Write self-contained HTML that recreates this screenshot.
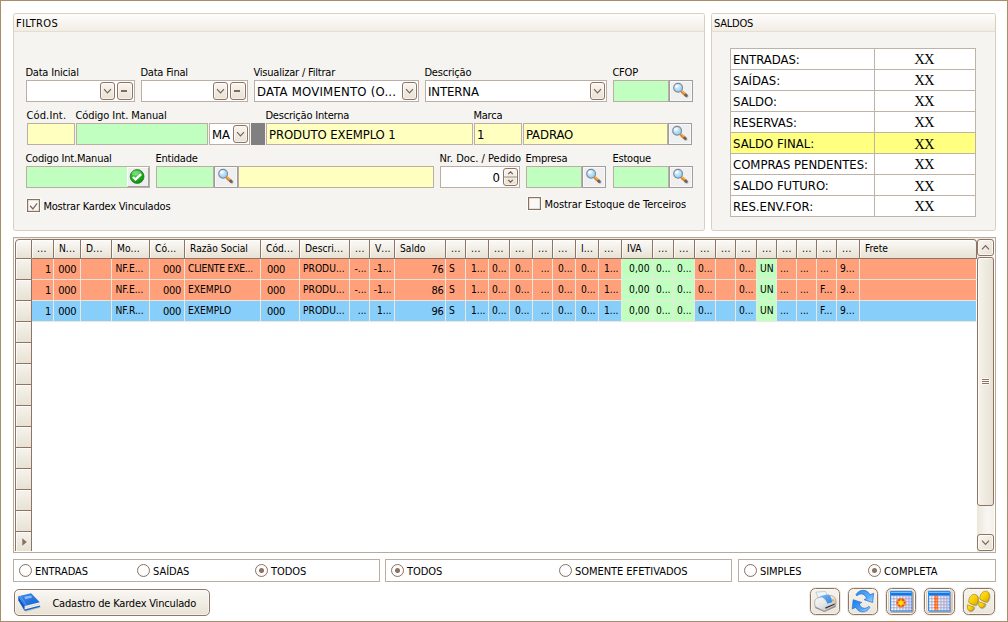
<!DOCTYPE html>
<html><head><meta charset="utf-8"><title>Kardex</title>
<style>
*{box-sizing:border-box;margin:0;padding:0}
html,body{width:1008px;height:622px;overflow:hidden;background:#fff}
body{position:relative;font-family:"DejaVu Sans Condensed","Liberation Sans",sans-serif;font-size:11px;color:#000}
div,span,svg{position:absolute}
.win{left:0;top:0;width:1008px;height:622px;background:#fff}
.frame{left:0;top:0;width:1008px;height:622px;border:1px solid #a98d66}
.panel{border:1px solid #d9cfbd;border-radius:2.5px;background:#f6f4f0}
.phead{left:0;top:0;right:0;height:18px;border-bottom:1px solid #e6dfd1;background:linear-gradient(#fefdfc,#f1ede5);border-radius:2px 2px 0 0}
.l{white-space:nowrap;line-height:13px;height:13px;letter-spacing:-0.2px}
.inp{border:1px solid #bcaea4;background:#fff}
.y{background:#ffffc0}
.g{background:#c0ffc0}
.t13{font-size:13px;white-space:nowrap;line-height:16px;height:16px;letter-spacing:-0.1px}
.dd{width:15px;height:18px;border:1px solid #8d7464;border-radius:3px;background:linear-gradient(#f8f6f1,#e8e2d4);box-shadow:inset 0 0 0 1px rgba(255,255,255,0.55)}
.mb{width:16px;height:18px;border:1px solid #8d7464;border-radius:3px;background:linear-gradient(#f8f6f1,#e8e2d4);box-shadow:inset 0 0 0 1px rgba(255,255,255,0.55)}
.sb{width:24px;height:22px;border:1px solid #9e9e9e;background:#efefef;box-shadow:inset 0 0 0 1px rgba(255,255,255,0.55)}
.cb{width:13px;height:13px;border:1px solid #8a7060;background:#f9f8f5;box-shadow:0 0 0 1px rgba(255,255,255,0.7),inset 0 0 0 0.5px rgba(138,112,96,0.35)}
.rg{border:1px solid #bcafa0;background:#fff}
.rd{width:13px;height:13px;border:1.4px solid #8a7264;border-radius:50%;background:radial-gradient(circle at 50% 45%,#fff 45%,#f1ece5)}
.rd.on::after{content:"";position:absolute;left:2.8px;top:2.8px;width:5px;height:5px;border-radius:50%;background:#8b7265}
.ib{height:27px;border:1px solid #8f7668;border-radius:5.5px;background:linear-gradient(#f6f3ec,#ebe6da);box-shadow:0 0 0 1px rgba(236,228,216,0.8),inset 0 0 0 1px rgba(255,255,255,0.45)}
.ib2{box-shadow:0 0 0 1px rgba(236,228,216,0.8),inset 0 0 0 1px #fbf9f4,inset 0 0 0 2px #d9cdbd}

.gh{top:239px;height:20px;border-top:1px solid #8d7464;border-right:1px solid #8d7464;border-bottom:1px solid #8d7464;background:linear-gradient(#fbfaf7,#f2eee6 50%,#e8e2d4);box-shadow:inset 1px 1px 0 rgba(255,255,255,0.7);white-space:nowrap;overflow:hidden;font-size:10.2px;line-height:18px;padding-left:5px}
.gc{height:20px;white-space:nowrap;overflow:hidden;font-size:10.2px;line-height:20px}
.gc.n{font-size:11px;letter-spacing:-0.3px;line-height:22px}
.ind{left:15px;width:17px;height:21px;border-left:1px solid #8d7464;border-right:1px solid #8d7464;border-bottom:1px solid #8d7464;background:linear-gradient(#f6f3ed,#e8e2d4);box-shadow:inset 1px 1px 0 rgba(255,255,255,0.7)}
</style></head><body>
<div class="win">
<svg width="0" height="0" style="left:0;top:0"><defs><radialGradient id="mg" cx="0.4" cy="0.35" r="0.7"><stop offset="0" stop-color="#e4f5ff"/><stop offset="0.6" stop-color="#a9dbf8"/><stop offset="1" stop-color="#7fc0ec"/></radialGradient><radialGradient id="cg" cx="0.4" cy="0.3" r="0.8"><stop offset="0" stop-color="#5cd85c"/><stop offset="0.55" stop-color="#1eab1e"/><stop offset="1" stop-color="#0d7d0d"/></radialGradient></defs></svg>
<div class="panel" style="left:13px;top:13px;width:692px;height:218px;"><div class="phead"></div></div>
<span class="l" style="left:15.9px;top:17px;letter-spacing:0.38px">FILTROS</span>
<span class="l" style="left:25.4px;top:66px;">Data Inicial</span>
<div class="inp" style="left:26px;top:80px;width:109px;height:22px;"></div>
<div class="dd" style="left:100px;top:82px"><svg width="13" height="16" viewBox="0 0 13 16" style="left:0;top:0"><path d="M3 6.2 L6.5 9.8 L10 6.2" fill="none" stroke="#7d6356" stroke-width="1.2"/></svg></div>
<div class="mb" style="left:117px;top:82px"><div style="left:3px;top:7px;width:6px;height:2px;background:#85695b"></div></div>
<span class="l" style="left:140.4px;top:66px;">Data Final</span>
<div class="inp" style="left:141px;top:80px;width:107px;height:22px;"></div>
<div class="dd" style="left:213px;top:82px"><svg width="13" height="16" viewBox="0 0 13 16" style="left:0;top:0"><path d="M3 6.2 L6.5 9.8 L10 6.2" fill="none" stroke="#7d6356" stroke-width="1.2"/></svg></div>
<div class="mb" style="left:230px;top:82px"><div style="left:3px;top:7px;width:6px;height:2px;background:#85695b"></div></div>
<span class="l" style="left:253.4px;top:66px;">Visualizar / Filtrar</span>
<div class="inp" style="left:254px;top:80px;width:165px;height:22px;"></div>
<span class="t13" style="left:257px;top:84px;letter-spacing:0.22px">DATA MOVIMENTO (O...</span>
<div class="dd" style="left:402px;top:82px"><svg width="13" height="16" viewBox="0 0 13 16" style="left:0;top:0"><path d="M3 6.2 L6.5 9.8 L10 6.2" fill="none" stroke="#7d6356" stroke-width="1.2"/></svg></div>
<span class="l" style="left:424.4px;top:66px;">Descrição</span>
<div class="inp" style="left:425px;top:80px;width:182px;height:22px;"></div>
<span class="t13" style="left:428px;top:84px;">INTERNA</span>
<div class="dd" style="left:590px;top:82px"><svg width="13" height="16" viewBox="0 0 13 16" style="left:0;top:0"><path d="M3 6.2 L6.5 9.8 L10 6.2" fill="none" stroke="#7d6356" stroke-width="1.2"/></svg></div>
<span class="l" style="left:612.4px;top:66px;">CFOP</span>
<div class="inp g" style="left:613px;top:80px;width:56px;height:22px;"></div>
<div class="sb" style="left:669px;top:80px"><svg width="22" height="20" viewBox="0 0 22 20" style="left:0;top:0"><path d="M12.6 11.4 L16.9 15.2" stroke="#8a8a8a" stroke-width="3.2" stroke-linecap="round" opacity="0.45"/><path d="M11.4 10.2 L15.8 14.1" stroke="#ee7d1c" stroke-width="2.8" stroke-linecap="butt"/><path d="M11.9 9.8 L16 13.5" stroke="#ffd24a" stroke-width="0.9" stroke-linecap="butt"/><path d="M15.6 13.9 L16.4 14.6" stroke="#666" stroke-width="2.8" stroke-linecap="round"/><circle cx="8.1" cy="6.8" r="4.4" fill="url(#mg)" stroke="#7d8894" stroke-width="1.1"/><ellipse cx="6.8" cy="5.2" rx="2" ry="1.3" fill="#fff" opacity="0.7" transform="rotate(-30 6.8 5.2)"/></svg></div>
<span class="l" style="left:26.4px;top:109px;letter-spacing:0.15px">Cód.Int.</span>
<div class="inp y" style="left:27px;top:123px;width:48px;height:22px;"></div>
<span class="l" style="left:75.4px;top:109px;letter-spacing:-0.08px">Código Int. Manual</span>
<div class="inp g" style="left:76px;top:123px;width:132px;height:22px;"></div>
<div class="inp" style="left:209px;top:123px;width:41px;height:22px;"></div>
<span class="t13" style="left:212px;top:127px;">MA</span>
<div class="dd" style="left:233px;top:125px"><svg width="13" height="16" viewBox="0 0 13 16" style="left:0;top:0"><path d="M3 6.2 L6.5 9.8 L10 6.2" fill="none" stroke="#7d6356" stroke-width="1.2"/></svg></div>
<div class="" style="left:251px;top:123px;width:14px;height:22px;background:#808080"></div>
<span class="l" style="left:265.4px;top:109px;">Descrição Interna</span>
<div class="inp y" style="left:266px;top:123px;width:207px;height:22px;"></div>
<span class="t13" style="left:269px;top:127px;">PRODUTO EXEMPLO 1</span>
<span class="l" style="left:473.4px;top:109px;">Marca</span>
<div class="inp y" style="left:474px;top:123px;width:48px;height:22px;"></div>
<span class="t13" style="left:477px;top:127px;">1</span>
<div class="inp y" style="left:523px;top:123px;width:145px;height:22px;"></div>
<span class="t13" style="left:526px;top:127px;">PADRAO</span>
<div class="sb" style="left:668px;top:123px"><svg width="22" height="20" viewBox="0 0 22 20" style="left:0;top:0"><path d="M12.6 11.4 L16.9 15.2" stroke="#8a8a8a" stroke-width="3.2" stroke-linecap="round" opacity="0.45"/><path d="M11.4 10.2 L15.8 14.1" stroke="#ee7d1c" stroke-width="2.8" stroke-linecap="butt"/><path d="M11.9 9.8 L16 13.5" stroke="#ffd24a" stroke-width="0.9" stroke-linecap="butt"/><path d="M15.6 13.9 L16.4 14.6" stroke="#666" stroke-width="2.8" stroke-linecap="round"/><circle cx="8.1" cy="6.8" r="4.4" fill="url(#mg)" stroke="#7d8894" stroke-width="1.1"/><ellipse cx="6.8" cy="5.2" rx="2" ry="1.3" fill="#fff" opacity="0.7" transform="rotate(-30 6.8 5.2)"/></svg></div>
<span class="l" style="left:25.4px;top:152px;">Codigo Int.Manual</span>
<div class="inp g" style="left:26px;top:166px;width:124px;height:22px;"></div>
<div style="left:127px;top:167px;width:22px;height:20px;background:#eee;border-top:1px solid #fff;border-left:1px solid #fff;border-right:1px solid #a2a2a2;border-bottom:1px solid #a2a2a2"><svg width="22" height="20" viewBox="0 0 22 20" style="left:0;top:0"><circle cx="9.1" cy="8.5" r="6.9" fill="url(#cg)" stroke="#128312" stroke-width="0.8"/><ellipse cx="8.1" cy="5" rx="4.6" ry="2.6" fill="#fff" opacity="0.22"/><path d="M4.8 9 L7.5 11.4 L13.2 6.1" fill="none" stroke="#fff" stroke-width="2.3" stroke-linecap="butt" stroke-linejoin="miter"/></svg></div>
<span class="l" style="left:155.4px;top:152px;">Entidade</span>
<div class="inp g" style="left:156px;top:166px;width:58px;height:22px;"></div>
<div class="sb" style="left:214px;top:166px"><svg width="22" height="20" viewBox="0 0 22 20" style="left:0;top:0"><path d="M12.6 11.4 L16.9 15.2" stroke="#8a8a8a" stroke-width="3.2" stroke-linecap="round" opacity="0.45"/><path d="M11.4 10.2 L15.8 14.1" stroke="#ee7d1c" stroke-width="2.8" stroke-linecap="butt"/><path d="M11.9 9.8 L16 13.5" stroke="#ffd24a" stroke-width="0.9" stroke-linecap="butt"/><path d="M15.6 13.9 L16.4 14.6" stroke="#666" stroke-width="2.8" stroke-linecap="round"/><circle cx="8.1" cy="6.8" r="4.4" fill="url(#mg)" stroke="#7d8894" stroke-width="1.1"/><ellipse cx="6.8" cy="5.2" rx="2" ry="1.3" fill="#fff" opacity="0.7" transform="rotate(-30 6.8 5.2)"/></svg></div>
<div class="inp y" style="left:238px;top:166px;width:196px;height:22px;"></div>
<span class="l" style="left:439.4px;top:152px;letter-spacing:0">Nr. Doc. / Pedido</span>
<div class="inp" style="left:440px;top:166px;width:80px;height:22px;"></div>
<span class="t13" style="left:440px;top:170px;width:59.8px;text-align:right">0</span>
<div class="dd" style="left:503px;top:168px;width:15px;height:18px"><svg width="13" height="16" viewBox="0 0 13 16" style="left:0;top:0"><rect x="0" y="7.5" width="13" height="1" fill="#a08b7c"/><path d="M4.2 5.2 L6.5 2.9 L8.8 5.2" fill="none" stroke="#6f584c" stroke-width="1.2"/><path d="M4.2 10.8 L6.5 13.1 L8.8 10.8" fill="none" stroke="#6f584c" stroke-width="1.2"/></svg></div>
<span class="l" style="left:525.4px;top:152px;">Empresa</span>
<div class="inp g" style="left:526px;top:166px;width:56px;height:22px;"></div>
<div class="sb" style="left:582px;top:166px"><svg width="22" height="20" viewBox="0 0 22 20" style="left:0;top:0"><path d="M12.6 11.4 L16.9 15.2" stroke="#8a8a8a" stroke-width="3.2" stroke-linecap="round" opacity="0.45"/><path d="M11.4 10.2 L15.8 14.1" stroke="#ee7d1c" stroke-width="2.8" stroke-linecap="butt"/><path d="M11.9 9.8 L16 13.5" stroke="#ffd24a" stroke-width="0.9" stroke-linecap="butt"/><path d="M15.6 13.9 L16.4 14.6" stroke="#666" stroke-width="2.8" stroke-linecap="round"/><circle cx="8.1" cy="6.8" r="4.4" fill="url(#mg)" stroke="#7d8894" stroke-width="1.1"/><ellipse cx="6.8" cy="5.2" rx="2" ry="1.3" fill="#fff" opacity="0.7" transform="rotate(-30 6.8 5.2)"/></svg></div>
<span class="l" style="left:612.4px;top:152px;">Estoque</span>
<div class="inp g" style="left:613px;top:166px;width:56px;height:22px;"></div>
<div class="sb" style="left:669px;top:166px"><svg width="22" height="20" viewBox="0 0 22 20" style="left:0;top:0"><path d="M12.6 11.4 L16.9 15.2" stroke="#8a8a8a" stroke-width="3.2" stroke-linecap="round" opacity="0.45"/><path d="M11.4 10.2 L15.8 14.1" stroke="#ee7d1c" stroke-width="2.8" stroke-linecap="butt"/><path d="M11.9 9.8 L16 13.5" stroke="#ffd24a" stroke-width="0.9" stroke-linecap="butt"/><path d="M15.6 13.9 L16.4 14.6" stroke="#666" stroke-width="2.8" stroke-linecap="round"/><circle cx="8.1" cy="6.8" r="4.4" fill="url(#mg)" stroke="#7d8894" stroke-width="1.1"/><ellipse cx="6.8" cy="5.2" rx="2" ry="1.3" fill="#fff" opacity="0.7" transform="rotate(-30 6.8 5.2)"/></svg></div>
<div class="cb" style="left:27px;top:199px;width:13px;height:13px;"><svg width="11" height="11" viewBox="0 0 11 11" style="left:0;top:0"><path d="M2.1 5.7 L4.9 8.9 L9.1 3.3" fill="none" stroke="#85695b" stroke-width="1.3"/></svg></div>
<span class="l" style="left:43.4px;top:199.5px;">Mostrar Kardex Vinculados</span>
<div class="cb" style="left:528px;top:197px;width:13px;height:13px;"></div>
<span class="l" style="left:544.4px;top:198px;letter-spacing:-0.05px">Mostrar Estoque de Terceiros</span>
<div class="panel" style="left:711px;top:13px;width:285px;height:218px;"><div class="phead"></div></div>
<span class="l" style="left:713.9px;top:17px;">SALDOS</span>
<div class="" style="left:730px;top:48px;width:246px;height:169px;background:#beb3a7"></div>
<div class="" style="left:731px;top:49px;width:143px;height:20px;background:#fff"></div>
<div class="" style="left:875px;top:49px;width:100px;height:20px;background:#fff"></div>
<span class="t13" style="left:733px;top:52px;letter-spacing:-0.03px">ENTRADAS:</span>
<span class="t13" style="left:874px;top:50px;width:100px;text-align:center;font-family:'Liberation Serif',serif;font-size:14.6px;line-height:18px;height:18px;letter-spacing:-0.7px">XX</span>
<div class="" style="left:731px;top:70px;width:143px;height:20px;background:#fff"></div>
<div class="" style="left:875px;top:70px;width:100px;height:20px;background:#fff"></div>
<span class="t13" style="left:733px;top:73px;letter-spacing:-0.03px">SAÍDAS:</span>
<span class="t13" style="left:874px;top:71px;width:100px;text-align:center;font-family:'Liberation Serif',serif;font-size:14.6px;line-height:18px;height:18px;letter-spacing:-0.7px">XX</span>
<div class="" style="left:731px;top:91px;width:143px;height:20px;background:#fff"></div>
<div class="" style="left:875px;top:91px;width:100px;height:20px;background:#fff"></div>
<span class="t13" style="left:733px;top:94px;letter-spacing:-0.03px">SALDO:</span>
<span class="t13" style="left:874px;top:92px;width:100px;text-align:center;font-family:'Liberation Serif',serif;font-size:14.6px;line-height:18px;height:18px;letter-spacing:-0.7px">XX</span>
<div class="" style="left:731px;top:112px;width:143px;height:20px;background:#fff"></div>
<div class="" style="left:875px;top:112px;width:100px;height:20px;background:#fff"></div>
<span class="t13" style="left:733px;top:115px;letter-spacing:-0.03px">RESERVAS:</span>
<span class="t13" style="left:874px;top:113px;width:100px;text-align:center;font-family:'Liberation Serif',serif;font-size:14.6px;line-height:18px;height:18px;letter-spacing:-0.7px">XX</span>
<div class="" style="left:731px;top:133px;width:143px;height:20px;background:#ffff80"></div>
<div class="" style="left:875px;top:133px;width:100px;height:20px;background:#ffff80"></div>
<span class="t13" style="left:733px;top:136px;letter-spacing:-0.03px">SALDO FINAL:</span>
<span class="t13" style="left:874px;top:135px;width:100px;text-align:center;font-family:'Liberation Serif',serif;font-size:14.6px;line-height:18px;height:18px;letter-spacing:-0.7px">XX</span>
<div class="" style="left:731px;top:154px;width:143px;height:20px;background:#fff"></div>
<div class="" style="left:875px;top:154px;width:100px;height:20px;background:#fff"></div>
<span class="t13" style="left:733px;top:157px;letter-spacing:-0.03px">COMPRAS PENDENTES:</span>
<span class="t13" style="left:874px;top:155px;width:100px;text-align:center;font-family:'Liberation Serif',serif;font-size:14.6px;line-height:18px;height:18px;letter-spacing:-0.7px">XX</span>
<div class="" style="left:731px;top:175px;width:143px;height:20px;background:#fff"></div>
<div class="" style="left:875px;top:175px;width:100px;height:20px;background:#fff"></div>
<span class="t13" style="left:733px;top:178px;letter-spacing:-0.03px">SALDO FUTURO:</span>
<span class="t13" style="left:874px;top:177px;width:100px;text-align:center;font-family:'Liberation Serif',serif;font-size:14.6px;line-height:18px;height:18px;letter-spacing:-0.7px">XX</span>
<div class="" style="left:731px;top:196px;width:143px;height:20px;background:#fff"></div>
<div class="" style="left:875px;top:196px;width:100px;height:20px;background:#fff"></div>
<span class="t13" style="left:733px;top:199px;letter-spacing:-0.03px">RES.ENV.FOR:</span>
<span class="t13" style="left:874px;top:197px;width:100px;text-align:center;font-family:'Liberation Serif',serif;font-size:14.6px;line-height:18px;height:18px;letter-spacing:-0.7px">XX</span>
<div class="" style="left:13px;top:237px;width:983px;height:316px;border:1px solid #b8ab9b;background:#fff"></div>
<div class="" style="left:14px;top:238px;width:981px;height:1px;background:#efeae2"></div>
<div class="gh" style="padding:0;border-left:1px solid #8d7464;border-radius:4px 0 0 0;left:15px;width:17px"></div>
<div class="gh" style="left:32px;width:22px;letter-spacing:0.3px;">...</div>
<div class="gh" style="left:54px;width:27px;">N<span style="position:static;letter-spacing:0.25px">...</span></div>
<div class="gh" style="left:81px;width:31px;">D<span style="position:static;letter-spacing:0.25px">...</span></div>
<div class="gh" style="left:112px;width:38px;">Mo<span style="position:static;letter-spacing:0.25px">...</span></div>
<div class="gh" style="left:150px;width:35px;">Có<span style="position:static;letter-spacing:0.25px">...</span></div>
<div class="gh" style="left:185px;width:76px;">Razão Social</div>
<div class="gh" style="left:261px;width:39px;">Cód<span style="position:static;letter-spacing:0.25px">...</span></div>
<div class="gh" style="left:300px;width:50px;">Descri<span style="position:static;letter-spacing:0.25px">...</span></div>
<div class="gh" style="left:350px;width:20px;letter-spacing:0.3px;">...</div>
<div class="gh" style="left:370px;width:25px;">V<span style="position:static;letter-spacing:0.25px">...</span></div>
<div class="gh" style="left:395px;width:51px;">Saldo</div>
<div class="gh" style="left:446px;width:20px;letter-spacing:0.3px;">...</div>
<div class="gh" style="left:466px;width:23px;letter-spacing:0.3px;">...</div>
<div class="gh" style="left:489px;width:21px;letter-spacing:0.3px;">...</div>
<div class="gh" style="left:510px;width:23px;letter-spacing:0.3px;">...</div>
<div class="gh" style="left:533px;width:20px;letter-spacing:0.3px;">...</div>
<div class="gh" style="left:553px;width:23px;letter-spacing:0.3px;">...</div>
<div class="gh" style="left:576px;width:23px;">I<span style="position:static;letter-spacing:0.25px">...</span></div>
<div class="gh" style="left:599px;width:23px;letter-spacing:0.3px;">...</div>
<div class="gh" style="left:622px;width:31px;">IVA</div>
<div class="gh" style="left:653px;width:21px;letter-spacing:0.3px;">...</div>
<div class="gh" style="left:674px;width:21px;letter-spacing:0.3px;">...</div>
<div class="gh" style="left:695px;width:21px;letter-spacing:0.3px;">...</div>
<div class="gh" style="left:716px;width:20px;letter-spacing:0.3px;">...</div>
<div class="gh" style="left:736px;width:21px;letter-spacing:0.3px;">...</div>
<div class="gh" style="left:757px;width:20px;letter-spacing:0.3px;">...</div>
<div class="gh" style="left:777px;width:20px;letter-spacing:0.3px;">...</div>
<div class="gh" style="left:797px;width:20px;letter-spacing:0.3px;">...</div>
<div class="gh" style="left:817px;width:20px;letter-spacing:0.3px;">...</div>
<div class="gh" style="left:837px;width:23px;letter-spacing:0.3px;">...</div>
<div class="gh" style="left:860px;width:117px;border-radius:0 4px 0 0;">Frete</div>
<div class="gc n" style="left:32px;top:259px;width:21px;background:#ffa07a;text-align:right;padding-right:2px;">1</div>
<div class="" style="left:53px;top:259px;width:1px;height:20px;background:#ebe6de"></div>
<div class="gc n" style="left:54px;top:259px;width:26px;background:#ffa07a;padding-left:4.2px;">000</div>
<div class="" style="left:80px;top:259px;width:1px;height:20px;background:#ebe6de"></div>
<div class="gc" style="left:81px;top:259px;width:30px;background:#ffa07a;padding-left:3px;"></div>
<div class="" style="left:111px;top:259px;width:1px;height:20px;background:#ebe6de"></div>
<div class="gc" style="left:112px;top:259px;width:37px;background:#ffa07a;padding-left:3.5px;">NF.E...</div>
<div class="" style="left:149px;top:259px;width:1px;height:20px;background:#ebe6de"></div>
<div class="gc n" style="left:150px;top:259px;width:34px;background:#ffa07a;text-align:right;padding-right:3px;">000</div>
<div class="" style="left:184px;top:259px;width:1px;height:20px;background:#ebe6de"></div>
<div class="gc" style="left:185px;top:259px;width:75px;background:#ffa07a;padding-left:3px;"><span style="position:static;letter-spacing:-0.2px">CLIENTE EXE...</span></div>
<div class="" style="left:260px;top:259px;width:1px;height:20px;background:#ebe6de"></div>
<div class="gc n" style="left:261px;top:259px;width:38px;background:#ffa07a;padding-left:6px;">000</div>
<div class="" style="left:299px;top:259px;width:1px;height:20px;background:#ebe6de"></div>
<div class="gc" style="left:300px;top:259px;width:49px;background:#ffa07a;padding-left:3px;">PRODU...</div>
<div class="" style="left:349px;top:259px;width:1px;height:20px;background:#ebe6de"></div>
<div class="gc" style="left:350px;top:259px;width:19px;background:#ffa07a;text-align:right;padding-right:2.5px;">-...</div>
<div class="" style="left:369px;top:259px;width:1px;height:20px;background:#ebe6de"></div>
<div class="gc" style="left:370px;top:259px;width:24px;background:#ffa07a;text-align:right;padding-right:2.5px;">-1...</div>
<div class="" style="left:394px;top:259px;width:1px;height:20px;background:#ebe6de"></div>
<div class="gc n" style="left:395px;top:259px;width:50px;background:#ffa07a;text-align:right;padding-right:1.5px;">76</div>
<div class="" style="left:445px;top:259px;width:1px;height:20px;background:#ebe6de"></div>
<div class="gc" style="left:446px;top:259px;width:19px;background:#ffa07a;padding-left:3px;">S</div>
<div class="" style="left:465px;top:259px;width:1px;height:20px;background:#ebe6de"></div>
<div class="gc" style="left:466px;top:259px;width:22px;background:#ffa07a;text-align:right;padding-right:2.5px;">1...</div>
<div class="" style="left:488px;top:259px;width:1px;height:20px;background:#ebe6de"></div>
<div class="gc" style="left:489px;top:259px;width:20px;background:#ffa07a;text-align:right;padding-right:2.5px;">0...</div>
<div class="" style="left:509px;top:259px;width:1px;height:20px;background:#ebe6de"></div>
<div class="gc" style="left:510px;top:259px;width:22px;background:#ffa07a;text-align:right;padding-right:2.5px;">0...</div>
<div class="" style="left:532px;top:259px;width:1px;height:20px;background:#ebe6de"></div>
<div class="gc" style="left:533px;top:259px;width:19px;background:#ffa07a;text-align:right;padding-right:2.5px;">...</div>
<div class="" style="left:552px;top:259px;width:1px;height:20px;background:#ebe6de"></div>
<div class="gc" style="left:553px;top:259px;width:22px;background:#ffa07a;text-align:right;padding-right:2.5px;">0...</div>
<div class="" style="left:575px;top:259px;width:1px;height:20px;background:#ebe6de"></div>
<div class="gc" style="left:576px;top:259px;width:22px;background:#ffa07a;text-align:right;padding-right:2.5px;">0...</div>
<div class="" style="left:598px;top:259px;width:1px;height:20px;background:#ebe6de"></div>
<div class="gc" style="left:599px;top:259px;width:22px;background:#ffa07a;text-align:right;padding-right:2.5px;">1...</div>
<div class="" style="left:621px;top:259px;width:1px;height:20px;background:#ebe6de"></div>
<div class="gc" style="left:622px;top:259px;width:30px;background:#c0ffc0;text-align:right;padding-right:2.5px;">0,00</div>
<div class="" style="left:652px;top:259px;width:1px;height:20px;background:#ebe6de"></div>
<div class="gc" style="left:653px;top:259px;width:20px;background:#c0ffc0;text-align:right;padding-right:2.5px;">0...</div>
<div class="" style="left:673px;top:259px;width:1px;height:20px;background:#ebe6de"></div>
<div class="gc" style="left:674px;top:259px;width:20px;background:#c0ffc0;text-align:right;padding-right:2.5px;">0...</div>
<div class="" style="left:694px;top:259px;width:1px;height:20px;background:#ebe6de"></div>
<div class="gc" style="left:695px;top:259px;width:20px;background:#ffa07a;text-align:right;padding-right:2.5px;">0...</div>
<div class="" style="left:715px;top:259px;width:1px;height:20px;background:#ebe6de"></div>
<div class="gc" style="left:716px;top:259px;width:19px;background:#ffa07a;padding-left:3px;"></div>
<div class="" style="left:735px;top:259px;width:1px;height:20px;background:#ebe6de"></div>
<div class="gc" style="left:736px;top:259px;width:20px;background:#ffa07a;text-align:right;padding-right:2.5px;">0...</div>
<div class="" style="left:756px;top:259px;width:1px;height:20px;background:#ebe6de"></div>
<div class="gc" style="left:757px;top:259px;width:19px;background:#c0ffc0;padding-left:3px;">UN</div>
<div class="" style="left:776px;top:259px;width:1px;height:20px;background:#ebe6de"></div>
<div class="gc" style="left:777px;top:259px;width:19px;background:#ffa07a;padding-left:3px;">...</div>
<div class="" style="left:796px;top:259px;width:1px;height:20px;background:#ebe6de"></div>
<div class="gc" style="left:797px;top:259px;width:19px;background:#ffa07a;padding-left:3px;">...</div>
<div class="" style="left:816px;top:259px;width:1px;height:20px;background:#ebe6de"></div>
<div class="gc" style="left:817px;top:259px;width:19px;background:#ffa07a;padding-left:3px;">...</div>
<div class="" style="left:836px;top:259px;width:1px;height:20px;background:#ebe6de"></div>
<div class="gc" style="left:837px;top:259px;width:22px;background:#ffa07a;padding-left:3px;">9...</div>
<div class="" style="left:859px;top:259px;width:1px;height:20px;background:#ebe6de"></div>
<div class="gc" style="left:860px;top:259px;width:116px;background:#ffa07a;padding-left:3px;"></div>
<div class="" style="left:32px;top:279px;width:945px;height:1px;background:#ebe6de"></div>
<div class="gc n" style="left:32px;top:280px;width:21px;background:#ffa07a;text-align:right;padding-right:2px;">1</div>
<div class="" style="left:53px;top:280px;width:1px;height:20px;background:#ebe6de"></div>
<div class="gc n" style="left:54px;top:280px;width:26px;background:#ffa07a;padding-left:4.2px;">000</div>
<div class="" style="left:80px;top:280px;width:1px;height:20px;background:#ebe6de"></div>
<div class="gc" style="left:81px;top:280px;width:30px;background:#ffa07a;padding-left:3px;"></div>
<div class="" style="left:111px;top:280px;width:1px;height:20px;background:#ebe6de"></div>
<div class="gc" style="left:112px;top:280px;width:37px;background:#ffa07a;padding-left:3.5px;">NF.E...</div>
<div class="" style="left:149px;top:280px;width:1px;height:20px;background:#ebe6de"></div>
<div class="gc n" style="left:150px;top:280px;width:34px;background:#ffa07a;text-align:right;padding-right:3px;">000</div>
<div class="" style="left:184px;top:280px;width:1px;height:20px;background:#ebe6de"></div>
<div class="gc" style="left:185px;top:280px;width:75px;background:#ffa07a;padding-left:3px;">EXEMPLO</div>
<div class="" style="left:260px;top:280px;width:1px;height:20px;background:#ebe6de"></div>
<div class="gc n" style="left:261px;top:280px;width:38px;background:#ffa07a;padding-left:6px;">000</div>
<div class="" style="left:299px;top:280px;width:1px;height:20px;background:#ebe6de"></div>
<div class="gc" style="left:300px;top:280px;width:49px;background:#ffa07a;padding-left:3px;">PRODU...</div>
<div class="" style="left:349px;top:280px;width:1px;height:20px;background:#ebe6de"></div>
<div class="gc" style="left:350px;top:280px;width:19px;background:#ffa07a;text-align:right;padding-right:2.5px;">-...</div>
<div class="" style="left:369px;top:280px;width:1px;height:20px;background:#ebe6de"></div>
<div class="gc" style="left:370px;top:280px;width:24px;background:#ffa07a;text-align:right;padding-right:2.5px;">-1...</div>
<div class="" style="left:394px;top:280px;width:1px;height:20px;background:#ebe6de"></div>
<div class="gc n" style="left:395px;top:280px;width:50px;background:#ffa07a;text-align:right;padding-right:1.5px;">86</div>
<div class="" style="left:445px;top:280px;width:1px;height:20px;background:#ebe6de"></div>
<div class="gc" style="left:446px;top:280px;width:19px;background:#ffa07a;padding-left:3px;">S</div>
<div class="" style="left:465px;top:280px;width:1px;height:20px;background:#ebe6de"></div>
<div class="gc" style="left:466px;top:280px;width:22px;background:#ffa07a;text-align:right;padding-right:2.5px;">1...</div>
<div class="" style="left:488px;top:280px;width:1px;height:20px;background:#ebe6de"></div>
<div class="gc" style="left:489px;top:280px;width:20px;background:#ffa07a;text-align:right;padding-right:2.5px;">0...</div>
<div class="" style="left:509px;top:280px;width:1px;height:20px;background:#ebe6de"></div>
<div class="gc" style="left:510px;top:280px;width:22px;background:#ffa07a;text-align:right;padding-right:2.5px;">0...</div>
<div class="" style="left:532px;top:280px;width:1px;height:20px;background:#ebe6de"></div>
<div class="gc" style="left:533px;top:280px;width:19px;background:#ffa07a;text-align:right;padding-right:2.5px;">...</div>
<div class="" style="left:552px;top:280px;width:1px;height:20px;background:#ebe6de"></div>
<div class="gc" style="left:553px;top:280px;width:22px;background:#ffa07a;text-align:right;padding-right:2.5px;">0...</div>
<div class="" style="left:575px;top:280px;width:1px;height:20px;background:#ebe6de"></div>
<div class="gc" style="left:576px;top:280px;width:22px;background:#ffa07a;text-align:right;padding-right:2.5px;">0...</div>
<div class="" style="left:598px;top:280px;width:1px;height:20px;background:#ebe6de"></div>
<div class="gc" style="left:599px;top:280px;width:22px;background:#ffa07a;text-align:right;padding-right:2.5px;">1...</div>
<div class="" style="left:621px;top:280px;width:1px;height:20px;background:#ebe6de"></div>
<div class="gc" style="left:622px;top:280px;width:30px;background:#c0ffc0;text-align:right;padding-right:2.5px;">0,00</div>
<div class="" style="left:652px;top:280px;width:1px;height:20px;background:#ebe6de"></div>
<div class="gc" style="left:653px;top:280px;width:20px;background:#c0ffc0;text-align:right;padding-right:2.5px;">0...</div>
<div class="" style="left:673px;top:280px;width:1px;height:20px;background:#ebe6de"></div>
<div class="gc" style="left:674px;top:280px;width:20px;background:#c0ffc0;text-align:right;padding-right:2.5px;">0...</div>
<div class="" style="left:694px;top:280px;width:1px;height:20px;background:#ebe6de"></div>
<div class="gc" style="left:695px;top:280px;width:20px;background:#ffa07a;text-align:right;padding-right:2.5px;">0...</div>
<div class="" style="left:715px;top:280px;width:1px;height:20px;background:#ebe6de"></div>
<div class="gc" style="left:716px;top:280px;width:19px;background:#ffa07a;padding-left:3px;"></div>
<div class="" style="left:735px;top:280px;width:1px;height:20px;background:#ebe6de"></div>
<div class="gc" style="left:736px;top:280px;width:20px;background:#ffa07a;text-align:right;padding-right:2.5px;">0...</div>
<div class="" style="left:756px;top:280px;width:1px;height:20px;background:#ebe6de"></div>
<div class="gc" style="left:757px;top:280px;width:19px;background:#c0ffc0;padding-left:3px;">UN</div>
<div class="" style="left:776px;top:280px;width:1px;height:20px;background:#ebe6de"></div>
<div class="gc" style="left:777px;top:280px;width:19px;background:#ffa07a;padding-left:3px;">...</div>
<div class="" style="left:796px;top:280px;width:1px;height:20px;background:#ebe6de"></div>
<div class="gc" style="left:797px;top:280px;width:19px;background:#ffa07a;padding-left:3px;">...</div>
<div class="" style="left:816px;top:280px;width:1px;height:20px;background:#ebe6de"></div>
<div class="gc" style="left:817px;top:280px;width:19px;background:#ffa07a;padding-left:3px;">F...</div>
<div class="" style="left:836px;top:280px;width:1px;height:20px;background:#ebe6de"></div>
<div class="gc" style="left:837px;top:280px;width:22px;background:#ffa07a;padding-left:3px;">9...</div>
<div class="" style="left:859px;top:280px;width:1px;height:20px;background:#ebe6de"></div>
<div class="gc" style="left:860px;top:280px;width:116px;background:#ffa07a;padding-left:3px;"></div>
<div class="" style="left:32px;top:300px;width:945px;height:1px;background:#ebe6de"></div>
<div class="gc n" style="left:32px;top:301px;width:21px;background:#87cefa;text-align:right;padding-right:2px;">1</div>
<div class="" style="left:53px;top:301px;width:1px;height:20px;background:#ebe6de"></div>
<div class="gc n" style="left:54px;top:301px;width:26px;background:#87cefa;padding-left:4.2px;">000</div>
<div class="" style="left:80px;top:301px;width:1px;height:20px;background:#ebe6de"></div>
<div class="gc" style="left:81px;top:301px;width:30px;background:#87cefa;padding-left:3px;"></div>
<div class="" style="left:111px;top:301px;width:1px;height:20px;background:#ebe6de"></div>
<div class="gc" style="left:112px;top:301px;width:37px;background:#87cefa;padding-left:3.5px;">NF.R...</div>
<div class="" style="left:149px;top:301px;width:1px;height:20px;background:#ebe6de"></div>
<div class="gc n" style="left:150px;top:301px;width:34px;background:#87cefa;text-align:right;padding-right:3px;">000</div>
<div class="" style="left:184px;top:301px;width:1px;height:20px;background:#ebe6de"></div>
<div class="gc" style="left:185px;top:301px;width:75px;background:#87cefa;padding-left:3px;">EXEMPLO</div>
<div class="" style="left:260px;top:301px;width:1px;height:20px;background:#ebe6de"></div>
<div class="gc n" style="left:261px;top:301px;width:38px;background:#87cefa;padding-left:6px;">000</div>
<div class="" style="left:299px;top:301px;width:1px;height:20px;background:#ebe6de"></div>
<div class="gc" style="left:300px;top:301px;width:49px;background:#87cefa;padding-left:3px;">PRODU...</div>
<div class="" style="left:349px;top:301px;width:1px;height:20px;background:#ebe6de"></div>
<div class="gc" style="left:350px;top:301px;width:19px;background:#87cefa;text-align:right;padding-right:2.5px;">...</div>
<div class="" style="left:369px;top:301px;width:1px;height:20px;background:#ebe6de"></div>
<div class="gc" style="left:370px;top:301px;width:24px;background:#87cefa;text-align:right;padding-right:2.5px;">1...</div>
<div class="" style="left:394px;top:301px;width:1px;height:20px;background:#ebe6de"></div>
<div class="gc n" style="left:395px;top:301px;width:50px;background:#87cefa;text-align:right;padding-right:1.5px;">96</div>
<div class="" style="left:445px;top:301px;width:1px;height:20px;background:#ebe6de"></div>
<div class="gc" style="left:446px;top:301px;width:19px;background:#87cefa;padding-left:3px;">S</div>
<div class="" style="left:465px;top:301px;width:1px;height:20px;background:#ebe6de"></div>
<div class="gc" style="left:466px;top:301px;width:22px;background:#87cefa;text-align:right;padding-right:2.5px;">1...</div>
<div class="" style="left:488px;top:301px;width:1px;height:20px;background:#ebe6de"></div>
<div class="gc" style="left:489px;top:301px;width:20px;background:#87cefa;text-align:right;padding-right:2.5px;">0...</div>
<div class="" style="left:509px;top:301px;width:1px;height:20px;background:#ebe6de"></div>
<div class="gc" style="left:510px;top:301px;width:22px;background:#87cefa;text-align:right;padding-right:2.5px;">0...</div>
<div class="" style="left:532px;top:301px;width:1px;height:20px;background:#ebe6de"></div>
<div class="gc" style="left:533px;top:301px;width:19px;background:#87cefa;text-align:right;padding-right:2.5px;">...</div>
<div class="" style="left:552px;top:301px;width:1px;height:20px;background:#ebe6de"></div>
<div class="gc" style="left:553px;top:301px;width:22px;background:#87cefa;text-align:right;padding-right:2.5px;">0...</div>
<div class="" style="left:575px;top:301px;width:1px;height:20px;background:#ebe6de"></div>
<div class="gc" style="left:576px;top:301px;width:22px;background:#87cefa;text-align:right;padding-right:2.5px;">0...</div>
<div class="" style="left:598px;top:301px;width:1px;height:20px;background:#ebe6de"></div>
<div class="gc" style="left:599px;top:301px;width:22px;background:#87cefa;text-align:right;padding-right:2.5px;">1...</div>
<div class="" style="left:621px;top:301px;width:1px;height:20px;background:#ebe6de"></div>
<div class="gc" style="left:622px;top:301px;width:30px;background:#c0ffc0;text-align:right;padding-right:2.5px;">0,00</div>
<div class="" style="left:652px;top:301px;width:1px;height:20px;background:#ebe6de"></div>
<div class="gc" style="left:653px;top:301px;width:20px;background:#c0ffc0;text-align:right;padding-right:2.5px;">0...</div>
<div class="" style="left:673px;top:301px;width:1px;height:20px;background:#ebe6de"></div>
<div class="gc" style="left:674px;top:301px;width:20px;background:#c0ffc0;text-align:right;padding-right:2.5px;">0...</div>
<div class="" style="left:694px;top:301px;width:1px;height:20px;background:#ebe6de"></div>
<div class="gc" style="left:695px;top:301px;width:20px;background:#87cefa;text-align:right;padding-right:2.5px;">0...</div>
<div class="" style="left:715px;top:301px;width:1px;height:20px;background:#ebe6de"></div>
<div class="gc" style="left:716px;top:301px;width:19px;background:#87cefa;padding-left:3px;"></div>
<div class="" style="left:735px;top:301px;width:1px;height:20px;background:#ebe6de"></div>
<div class="gc" style="left:736px;top:301px;width:20px;background:#87cefa;text-align:right;padding-right:2.5px;">0...</div>
<div class="" style="left:756px;top:301px;width:1px;height:20px;background:#ebe6de"></div>
<div class="gc" style="left:757px;top:301px;width:19px;background:#c0ffc0;padding-left:3px;">UN</div>
<div class="" style="left:776px;top:301px;width:1px;height:20px;background:#ebe6de"></div>
<div class="gc" style="left:777px;top:301px;width:19px;background:#87cefa;padding-left:3px;">...</div>
<div class="" style="left:796px;top:301px;width:1px;height:20px;background:#ebe6de"></div>
<div class="gc" style="left:797px;top:301px;width:19px;background:#87cefa;padding-left:3px;">...</div>
<div class="" style="left:816px;top:301px;width:1px;height:20px;background:#ebe6de"></div>
<div class="gc" style="left:817px;top:301px;width:19px;background:#87cefa;padding-left:3px;">F...</div>
<div class="" style="left:836px;top:301px;width:1px;height:20px;background:#ebe6de"></div>
<div class="gc" style="left:837px;top:301px;width:22px;background:#87cefa;padding-left:3px;">9...</div>
<div class="" style="left:859px;top:301px;width:1px;height:20px;background:#ebe6de"></div>
<div class="gc" style="left:860px;top:301px;width:116px;background:#87cefa;padding-left:3px;"></div>
<div class="" style="left:32px;top:321px;width:945px;height:1px;background:#ebe6de"></div>
<div class="ind" style="top:259px;height:21px;"></div>
<div class="ind" style="top:280px;height:21px;"></div>
<div class="ind" style="top:301px;height:21px;"></div>
<div class="ind" style="top:322px;height:21px;"></div>
<div class="ind" style="top:343px;height:21px;"></div>
<div class="ind" style="top:364px;height:21px;"></div>
<div class="ind" style="top:385px;height:21px;"></div>
<div class="ind" style="top:406px;height:21px;"></div>
<div class="ind" style="top:427px;height:21px;"></div>
<div class="ind" style="top:448px;height:21px;"></div>
<div class="ind" style="top:469px;height:21px;"></div>
<div class="ind" style="top:490px;height:21px;"></div>
<div class="ind" style="top:511px;height:21px;"></div>
<div class="ind" style="top:532px;height:19px;border-bottom:none;"></div>
<svg width="6" height="8" viewBox="0 0 6 8" style="left:22px;top:538px"><path d="M0.3 0.3 L4.8 4 L0.3 7.7 Z" fill="#8a7060"/></svg>
<div class="" style="left:977px;top:239px;width:17px;height:313px;background:linear-gradient(90deg,#ece7db,#f8f6f2 60%,#f4f1eb)"></div>
<div class="" style="left:977px;top:257px;width:17px;height:249px;border:1px solid #8d7464;border-radius:3px;background:linear-gradient(90deg,#f6f3ec,#e8e2d4);box-shadow:inset 1px 1px 0 rgba(255,255,255,0.7)"></div>
<div class="" style="left:981px;top:378px;width:9px;height:7px;background:rgba(255,255,255,0.6);border-radius:2px"></div>
<div class="" style="left:982px;top:379px;width:7px;height:1px;background:#8d7464"></div>
<div class="" style="left:982px;top:381px;width:7px;height:1px;background:#8d7464"></div>
<div class="" style="left:982px;top:383px;width:7px;height:1px;background:#8d7464"></div>
<div class="dd" style="left:977px;top:239px;width:17px;height:17px;border-radius:3px;border-color:#8d7464;background:linear-gradient(135deg,#f8f6f1,#e7e1d3);box-shadow:inset 0 0 0 1px rgba(255,255,255,0.7)"><svg width="15" height="15" viewBox="0 0 15 15" style="left:0;top:0"><path d="M4 9.3 L7.5 5.6 L11 9.3" fill="none" stroke="#7a6458" stroke-width="1.2"/></svg></div>
<div class="dd" style="left:977px;top:534px;width:17px;height:17px;border-radius:3px;border-color:#8d7464;background:linear-gradient(135deg,#f8f6f1,#e7e1d3);box-shadow:inset 0 0 0 1px rgba(255,255,255,0.7)"><svg width="15" height="15" viewBox="0 0 15 15" style="left:0;top:0"><path d="M4 5.7 L7.5 9.4 L11 5.7" fill="none" stroke="#7a6458" stroke-width="1.2"/></svg></div>
<div class="rg" style="left:13px;top:559px;width:367px;height:23px;"></div>
<div class="rg" style="left:385px;top:559px;width:347px;height:23px;"></div>
<div class="rg" style="left:738px;top:559px;width:258px;height:23px;"></div>
<div class="rd" style="left:19px;top:564px"></div>
<span class="l" style="left:35.0px;top:564.5px;letter-spacing:-0.05px">ENTRADAS</span>
<div class="rd" style="left:137px;top:564px"></div>
<span class="l" style="left:153.0px;top:564.5px;letter-spacing:-0.05px">SAÍDAS</span>
<div class="rd on" style="left:255px;top:564px"></div>
<span class="l" style="left:271.0px;top:564.5px;letter-spacing:-0.05px">TODOS</span>
<div class="rd on" style="left:391px;top:564px"></div>
<span class="l" style="left:407.0px;top:564.5px;letter-spacing:-0.05px">TODOS</span>
<div class="rd" style="left:559px;top:564px"></div>
<span class="l" style="left:575.0px;top:564.5px;letter-spacing:-0.05px">SOMENTE EFETIVADOS</span>
<div class="rd" style="left:744px;top:564px"></div>
<span class="l" style="left:760.0px;top:564.5px;letter-spacing:-0.05px">SIMPLES</span>
<div class="rd on" style="left:868px;top:564px"></div>
<span class="l" style="left:884.0px;top:564.5px;letter-spacing:0.1px">COMPLETA</span>
<div class="" style="left:14px;top:589px;width:196px;height:27px;border:1px solid #917769;border-radius:5px;background:linear-gradient(#f9f7f3,#f1ede5 50%,#e8e2d5);box-shadow:inset 0 0 0 1px rgba(255,255,255,0.5)"></div>
<span class="l" style="left:52.4px;top:597px;letter-spacing:-0.18px">Cadastro de Kardex Vinculado</span>
<svg width="24" height="20" viewBox="0 0 24 20" style="left:18px;top:593px"><defs><linearGradient id="bk" x1="0" y1="0" x2="1" y2="1"><stop offset="0" stop-color="#3f8ff0"/><stop offset="1" stop-color="#1560d2"/></linearGradient></defs><path d="M7.4 17.6 L22.6 13.4 L22.6 14.8 L7.6 18.9 Z" fill="#9a9a9a" opacity="0.4"/><path d="M0.2 3.3 L6.8 12.8 L6.5 17.8 L0.3 7.2 Z" fill="#1355bd"/><path d="M6.8 12.9 L21.8 9.4 L21.8 12.6 L6.9 16.6 Z" fill="#f2f2ee"/><path d="M7.2 14.6 L21.8 10.9" stroke="#c9c9c4" stroke-width="0.6"/><path d="M6.5 16.5 L21.8 12.4 L21.8 13.9 L6.5 17.9 Z" fill="#1a62cc"/><path d="M0.2 3.3 L13.1 0.3 L21.8 9.3 L6.8 12.9 Z" fill="url(#bk)"/><path d="M2.1 2.9 L8.4 12.4" stroke="#79b2f6" stroke-width="0.6" fill="none"/><path d="M6.2 3.8 L13.1 2.5 L14.3 4.5 L7.4 6.2 Z" fill="#9ec8f6" opacity="0.85"/></svg>
<div class="ib" style="left:810px;top:588px;width:30px;height:27px;"></div>
<div class="ib" style="left:848px;top:588px;width:30px;height:27px;"></div>
<div class="ib ib2" style="left:886px;top:588px;width:30px;height:27px;"></div>
<div class="ib ib2" style="left:924px;top:588px;width:31px;height:27px;"></div>
<div class="ib" style="left:963px;top:588px;width:32px;height:27px;"></div>
<svg width="23" height="21" viewBox="0 0 23 21" style="left:814px;top:591px"><defs><linearGradient id="pb" x1="0" y1="0" x2="1" y2="1"><stop offset="0" stop-color="#fdfdfd"/><stop offset="0.5" stop-color="#e4e4e4"/><stop offset="1" stop-color="#a9a9a9"/></linearGradient><linearGradient id="pp" x1="0" y1="0" x2="1" y2="1"><stop offset="0" stop-color="#7db9f2"/><stop offset="1" stop-color="#2f86e2"/></linearGradient></defs>
<path d="M1.9 1.2 L11.4 0.4 L12.9 3.6 L4 6.6 Z" fill="#e9f6fd" stroke="#a8b4bc" stroke-width="0.6"/>
<path d="M0.6 12.5 C0.2 9.5 1.6 7.6 4.2 6.8 L12 4.6 C15.5 3.8 19.5 4.6 21 7 C22.4 9.2 22.4 12.5 21.6 14.6 L10.4 20.2 L1.2 15.8 Z" fill="url(#pb)" stroke="#8d8d8d" stroke-width="0.6"/>
<path d="M5.6 5.2 L14.6 3.4 C17.2 5.4 18.2 8.6 18 11.2 L13.4 12.8 C12.6 9.4 9.6 6.4 5.6 5.2 Z" fill="url(#pp)"/>
<path d="M11.2 16.4 L20.6 12.4 L20.8 13.6 L11.6 17.8 Z" fill="#2e2e2e"/>
<path d="M1.2 15.8 L10.4 20.2 L21.6 14.6 L21.8 16 L10.4 21 L1.2 17 Z" fill="#8c8c8c"/>
<circle cx="18.9" cy="9.4" r="1.1" fill="#f7a11a"/></svg>
<svg width="30" height="27" viewBox="0 0 30 27" style="left:848px;top:588px"><defs><linearGradient id="ra" x1="0" y1="0" x2="1" y2="1"><stop offset="0" stop-color="#2b8cf2"/><stop offset="0.6" stop-color="#5aaaf8"/><stop offset="1" stop-color="#a5d3ff"/></linearGradient><linearGradient id="rb" x1="1" y1="1" x2="0" y2="0"><stop offset="0" stop-color="#1c7ae6"/><stop offset="0.6" stop-color="#4a9ff6"/><stop offset="1" stop-color="#b0d9ff"/></linearGradient></defs>
<path d="M7.9 6.9 C9.8 3.2 13.8 1.6 17.2 2.6 C19.6 3.3 21.1 5 21.9 6.8 L25.6 5.3 L24.6 14.5 L16.1 11.7 L18.6 10.3 C17.6 7.6 15.6 5.9 13.4 5.9 C11.6 5.9 10 6.7 9 7.9 Z" fill="url(#ra)" stroke="#1a6fd8" stroke-width="0.7" stroke-linejoin="round"/>
<path d="M7.9 6.9 C9.8 3.2 13.8 1.6 17.2 2.6 C19.6 3.3 21.1 5 21.9 6.8 L25.6 5.3 L24.6 14.5 L16.1 11.7 L18.6 10.3 C17.6 7.6 15.6 5.9 13.4 5.9 C11.6 5.9 10 6.7 9 7.9 Z" fill="url(#rb)" stroke="#1a6fd8" stroke-width="0.7" stroke-linejoin="round" transform="rotate(180 14.9 13.1)"/></svg>
<svg width="24" height="22" viewBox="0 0 24 22" style="left:890px;top:591px"><rect x="1" y="1" width="22.4" height="20.6" rx="0.8" fill="#5a5040" opacity="0.45"/><rect x="0" y="0" width="22.2" height="20.2" rx="0.8" fill="#1e90ff"/><rect x="1" y="1.2" width="20.2" height="1" fill="#8cc6ff"/><rect x="1" y="2.2" width="20.2" height="2.2" fill="#0a74ea"/><rect x="1" y="4.4" width="20.2" height="14.8" fill="#a9a9c6"/><rect x="1.4" y="5.3" width="2" height="2" fill="#ffffff"/><rect x="1.4" y="8.3" width="2" height="2" fill="#ffffff"/><rect x="1.4" y="11.3" width="2" height="2" fill="#ffffff"/><rect x="1.4" y="14.3" width="2" height="2" fill="#ffffff"/><rect x="1.4" y="17.3" width="2" height="2" fill="#ffffff"/><rect x="4.4" y="5.3" width="2" height="2" fill="#ffffff"/><rect x="4.4" y="8.3" width="2" height="2" fill="#ffffff"/><rect x="4.4" y="11.3" width="2" height="2" fill="#ffffff"/><rect x="4.4" y="14.3" width="2" height="2" fill="#ffffff"/><rect x="4.4" y="17.3" width="2" height="2" fill="#ffffff"/><rect x="7.4" y="5.3" width="2" height="2" fill="#fbf9ff"/><rect x="7.4" y="8.3" width="2" height="2" fill="#fbf9ff"/><rect x="7.4" y="11.3" width="2" height="2" fill="#fbf9ff"/><rect x="7.4" y="14.3" width="2" height="2" fill="#fbf9ff"/><rect x="7.4" y="17.3" width="2" height="2" fill="#fbf9ff"/><rect x="10.4" y="5.3" width="2" height="2" fill="#f4f0ff"/><rect x="10.4" y="8.3" width="2" height="2" fill="#f4f0ff"/><rect x="10.4" y="11.3" width="2" height="2" fill="#f4f0ff"/><rect x="10.4" y="14.3" width="2" height="2" fill="#f4f0ff"/><rect x="10.4" y="17.3" width="2" height="2" fill="#f4f0ff"/><rect x="13.4" y="5.3" width="2" height="2" fill="#ece6ff"/><rect x="13.4" y="8.3" width="2" height="2" fill="#ece6ff"/><rect x="13.4" y="11.3" width="2" height="2" fill="#ece6ff"/><rect x="13.4" y="14.3" width="2" height="2" fill="#ece6ff"/><rect x="13.4" y="17.3" width="2" height="2" fill="#ece6ff"/><rect x="16.4" y="5.3" width="2" height="2" fill="#e6deff"/><rect x="16.4" y="8.3" width="2" height="2" fill="#e6deff"/><rect x="16.4" y="11.3" width="2" height="2" fill="#e6deff"/><rect x="16.4" y="14.3" width="2" height="2" fill="#e6deff"/><rect x="16.4" y="17.3" width="2" height="2" fill="#e6deff"/><rect x="19.4" y="5.3" width="2" height="2" fill="#e0d6ff"/><rect x="19.4" y="8.3" width="2" height="2" fill="#e0d6ff"/><rect x="19.4" y="11.3" width="2" height="2" fill="#e0d6ff"/><rect x="19.4" y="14.3" width="2" height="2" fill="#e0d6ff"/><rect x="19.4" y="17.3" width="2" height="2" fill="#e0d6ff"/><circle cx="11" cy="11.8" r="4.6" fill="#f0401c" opacity="0.92"/><path d="M11 6.6 L12.3 10.4 L16 9 L13.4 11.8 L16 14.8 L12.3 13.3 L11 17 L9.7 13.3 L6 14.8 L8.6 11.8 L6 9 L9.7 10.4 Z" fill="#ffb400"/><circle cx="11" cy="11.8" r="2.2" fill="#ffe000"/></svg>
<svg width="24" height="22" viewBox="0 0 24 22" style="left:928px;top:591px"><rect x="1" y="1" width="22.4" height="20.6" rx="0.8" fill="#5a5040" opacity="0.45"/><rect x="0" y="0" width="22.2" height="20.2" rx="0.8" fill="#1e90ff"/><rect x="1" y="1.2" width="20.2" height="1" fill="#8cc6ff"/><rect x="1" y="2.2" width="20.2" height="2.2" fill="#0a74ea"/><rect x="1" y="4.4" width="20.2" height="14.8" fill="#a9a9c6"/><rect x="6.2" y="4.4" width="3.6" height="14.8" fill="#ff4a0e"/><rect x="1.4" y="5.3" width="2" height="2" fill="#ffffff"/><rect x="1.4" y="8.3" width="2" height="2" fill="#ffffff"/><rect x="1.4" y="11.3" width="2" height="2" fill="#ffffff"/><rect x="1.4" y="14.3" width="2" height="2" fill="#ffffff"/><rect x="1.4" y="17.3" width="2" height="2" fill="#ffffff"/><rect x="4.4" y="5.3" width="2" height="2" fill="#ffffff"/><rect x="4.4" y="8.3" width="2" height="2" fill="#ffffff"/><rect x="4.4" y="11.3" width="2" height="2" fill="#ffffff"/><rect x="4.4" y="14.3" width="2" height="2" fill="#ffffff"/><rect x="4.4" y="17.3" width="2" height="2" fill="#ffffff"/><rect x="7.4" y="5.3" width="2" height="2" fill="#ffb45e"/><rect x="7.4" y="8.3" width="2" height="2" fill="#ffb45e"/><rect x="7.4" y="11.3" width="2" height="2" fill="#ffb45e"/><rect x="7.4" y="14.3" width="2" height="2" fill="#ffb45e"/><rect x="7.4" y="17.3" width="2" height="2" fill="#ffb45e"/><rect x="10.4" y="5.3" width="2" height="2" fill="#f4f0ff"/><rect x="10.4" y="8.3" width="2" height="2" fill="#f4f0ff"/><rect x="10.4" y="11.3" width="2" height="2" fill="#f4f0ff"/><rect x="10.4" y="14.3" width="2" height="2" fill="#f4f0ff"/><rect x="10.4" y="17.3" width="2" height="2" fill="#f4f0ff"/><rect x="13.4" y="5.3" width="2" height="2" fill="#ece6ff"/><rect x="13.4" y="8.3" width="2" height="2" fill="#ece6ff"/><rect x="13.4" y="11.3" width="2" height="2" fill="#ece6ff"/><rect x="13.4" y="14.3" width="2" height="2" fill="#ece6ff"/><rect x="13.4" y="17.3" width="2" height="2" fill="#ece6ff"/><rect x="16.4" y="5.3" width="2" height="2" fill="#e6deff"/><rect x="16.4" y="8.3" width="2" height="2" fill="#e6deff"/><rect x="16.4" y="11.3" width="2" height="2" fill="#e6deff"/><rect x="16.4" y="14.3" width="2" height="2" fill="#e6deff"/><rect x="16.4" y="17.3" width="2" height="2" fill="#e6deff"/><rect x="19.4" y="5.3" width="2" height="2" fill="#e0d6ff"/><rect x="19.4" y="8.3" width="2" height="2" fill="#e0d6ff"/><rect x="19.4" y="11.3" width="2" height="2" fill="#e0d6ff"/><rect x="19.4" y="14.3" width="2" height="2" fill="#e0d6ff"/><rect x="19.4" y="17.3" width="2" height="2" fill="#e0d6ff"/></svg>
<svg width="32" height="27" viewBox="0 0 32 27" style="left:963px;top:588px"><defs><linearGradient id="ft" x1="0" y1="0" x2="1" y2="1"><stop offset="0" stop-color="#ffe64a"/><stop offset="0.5" stop-color="#f8cf00"/><stop offset="1" stop-color="#d8a800"/></linearGradient></defs>
<g opacity="0.35" transform="translate(0.7 0.7)" fill="#333"><g transform="translate(4.2 6.2)"><path d="M1.5 8 C1.3 4 3.6 0.4 7 0.2 C10 0 11.4 3 10.8 6.4 C10.4 8.6 9.4 10.4 8.4 11 C6 10.6 3.4 9.6 1.5 8 Z" fill="#333" stroke="#333" stroke-width="0.7"/><path d="M0.3 10.6 C2.4 11.6 4.8 12.4 7 12.8 C6.6 15.4 4.6 17 2.6 16.8 C0.6 16.4 -0.2 13.6 0.3 10.6 Z" fill="#333" stroke="#333" stroke-width="0.7"/></g><g transform="translate(15.4 3.0)"><path d="M1.5 8 C1.3 4 3.6 0.4 7 0.2 C10 0 11.4 3 10.8 6.4 C10.4 8.6 9.4 10.4 8.4 11 C6 10.6 3.4 9.6 1.5 8 Z" fill="#333" stroke="#333" stroke-width="0.7"/><path d="M0.3 10.6 C2.4 11.6 4.8 12.4 7 12.8 C6.6 15.4 4.6 17 2.6 16.8 C0.6 16.4 -0.2 13.6 0.3 10.6 Z" fill="#333" stroke="#333" stroke-width="0.7"/></g></g>
<g transform="translate(4.2 6.2)"><path d="M1.5 8 C1.3 4 3.6 0.4 7 0.2 C10 0 11.4 3 10.8 6.4 C10.4 8.6 9.4 10.4 8.4 11 C6 10.6 3.4 9.6 1.5 8 Z" fill="url(#ft)" stroke="#b48c00" stroke-width="0.7"/><path d="M0.3 10.6 C2.4 11.6 4.8 12.4 7 12.8 C6.6 15.4 4.6 17 2.6 16.8 C0.6 16.4 -0.2 13.6 0.3 10.6 Z" fill="url(#ft)" stroke="#b48c00" stroke-width="0.7"/></g><g transform="translate(15.4 3.0)"><path d="M1.5 8 C1.3 4 3.6 0.4 7 0.2 C10 0 11.4 3 10.8 6.4 C10.4 8.6 9.4 10.4 8.4 11 C6 10.6 3.4 9.6 1.5 8 Z" fill="url(#ft)" stroke="#b48c00" stroke-width="0.7"/><path d="M0.3 10.6 C2.4 11.6 4.8 12.4 7 12.8 C6.6 15.4 4.6 17 2.6 16.8 C0.6 16.4 -0.2 13.6 0.3 10.6 Z" fill="url(#ft)" stroke="#b48c00" stroke-width="0.7"/></g></svg>
<div class="frame"></div>
</div>
</body></html>
